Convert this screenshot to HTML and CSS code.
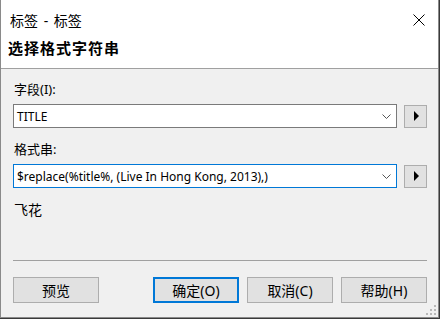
FILE: index.html
```html
<!DOCTYPE html>
<html lang="zh-CN">
<head>
    <meta charset="UTF-8">
    <title>标签 - 标签</title>
    <link rel="stylesheet" href="styles.css">
</head>
<body>

<div class="window">
    <div class="top">
        <div class="titlebar">
            <span class="title">标签 - 标签</span>
            <svg class="close" width="12" height="12" viewBox="0 0 12 12">
                <path d="M0.5 0.5 L11.5 11.5 M11.5 0.5 L0.5 11.5" stroke="#000" stroke-width="1" fill="none"/>
            </svg>
        </div>
        <h1>选择格式字符串</h1>
    </div>

    <div class="content">
        <div class="label">字段(I):</div>
        <div class="row">
            <div class="combo">
                <span class="value">TITLE</span>
                <svg class="chevron" width="9" height="5" viewBox="0 0 9 5">
                    <polyline points="0.5,0.5 4.5,4.5 8.5,0.5" stroke="#555" stroke-width="1" fill="none"/>
                </svg>
            </div>
            <button class="arrow"><span class="tri"></span></button>
        </div>

        <div class="label second">格式串:</div>
        <div class="row">
            <div class="combo focus">
                <span class="value">$replace(%title%, (Live In Hong Kong, 2013),)</span>
                <svg class="chevron" width="9" height="5" viewBox="0 0 9 5">
                    <polyline points="0.5,0.5 4.5,4.5 8.5,0.5" stroke="#555" stroke-width="1" fill="none"/>
                </svg>
            </div>
            <button class="arrow"><span class="tri"></span></button>
        </div>

        <div class="preview">飞花</div>

        <div class="divider"></div>

        <div class="buttons">
            <button class="btn">预览</button>
            <div class="right">
                <button class="btn default">确定(O)</button>
                <button class="btn">取消(C)</button>
                <button class="btn">帮助(H)</button>
            </div>
        </div>
    </div>

    <svg class="grip" width="10" height="10" viewBox="0 0 10 10">
        <rect x="8" y="0" width="2" height="2" fill="#b8b8b8"/>
        <rect x="4" y="4" width="2" height="2" fill="#b8b8b8"/>
        <rect x="8" y="4" width="2" height="2" fill="#b8b8b8"/>
        <rect x="0" y="8" width="2" height="2" fill="#b8b8b8"/>
        <rect x="4" y="8" width="2" height="2" fill="#b8b8b8"/>
        <rect x="8" y="8" width="2" height="2" fill="#b8b8b8"/>
    </svg>
</div>

</body>
</html>
```

FILE: styles.css
```css
body {
    margin: 0;
    background-color: #3a3a3a;
    font-family: "Noto Sans", "Noto Sans CJK SC", sans-serif;
    font-size: 13px;
    color: #000;
}

.window {
    position: relative;
    width: 437px;
    height: 317px;
    background-color: #f0f0f0;
    border: 1px solid #8a8a8a;
    border-top: none;
}

.top {
    background-color: #fff;
    height: 68px;
    border-bottom: 1px solid #a0a0a0;
}

.titlebar {
    height: 38px;
    display: flex;
    align-items: center;
    justify-content: space-between;
    padding: 0 13px 0 9px;
}

.title {
    font-size: 14px;
    word-spacing: 2px;
    margin-top: 1px;
}

.close {
    margin-top: 1px;
}

.top h1 {
    margin: 0;
    padding-left: 7px;
    font-size: 15px;
    letter-spacing: 1px;
    font-weight: bold;
    line-height: 20px;
}

.content {
    padding: 0 11px 0 12px;
}

.label {
    margin-top: 12px;
    line-height: 16px;
    padding-left: 1px;
}

.label.second {
    margin-top: 13px;
}

.row {
    display: flex;
    align-items: center;
    gap: 7px;
    margin-top: 7px;
}

.combo {
    flex: 1;
    height: 22px;
    background-color: #fff;
    border: 1px solid #7a7a7a;
    display: flex;
    align-items: center;
    justify-content: space-between;
    padding: 0 5px 0 3px;
}

.combo.focus {
    border-color: #0078d7;
}

.value {
    font-size: 12px;
    white-space: nowrap;
}

.arrow {
    width: 23px;
    height: 23px;
    background-color: #e1e1e1;
    border: 1px solid #adadad;
    padding: 0;
    display: flex;
    align-items: center;
    justify-content: center;
}

.tri {
    width: 0;
    height: 0;
    margin-left: 1px;
    border-top: 5px solid transparent;
    border-bottom: 5px solid transparent;
    border-left: 5px solid #000;
}

.preview {
    margin-top: 14px;
    line-height: 16px;
    padding-left: 1px;
    font-size: 14px;
}

.divider {
    margin-top: 42px;
    border-top: 1px solid #a0a0a0;
}

.buttons {
    display: flex;
    justify-content: space-between;
    margin-top: 16px;
}

.right {
    display: flex;
    gap: 8px;
}

.btn {
    width: 86px;
    height: 26px;
    background-color: #e1e1e1;
    border: 1px solid #adadad;
    font-family: "Noto Sans", "Noto Sans CJK SC", sans-serif;
    font-size: 14px;
    color: #000;
    padding: 0;
}

.btn.default {
    border: 2px solid #0078d7;
}

.grip {
    position: absolute;
    right: 2px;
    bottom: 2px;
}
```
